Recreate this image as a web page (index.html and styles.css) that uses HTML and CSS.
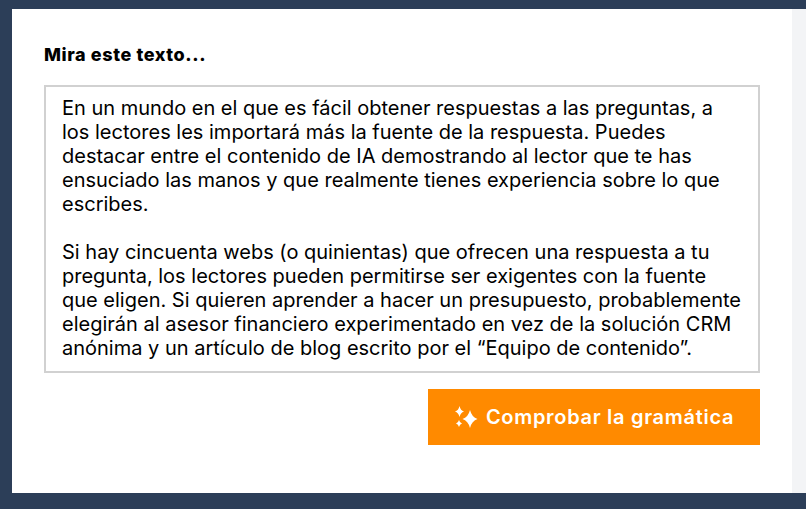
FILE: index.html
```html
<!DOCTYPE html>
<html lang="es">
<head>
    <meta charset="UTF-8">
    <meta name="viewport" content="width=device-width, initial-scale=1.0">
    <title>Comprobar la gramática</title>
    <link rel="stylesheet" href="styles.css">
</head>
<body>
    <main class="panel">
        <div class="panel-inner">
            <label class="field-label">Mira este texto...</label>
            <div class="text-box">
                <p>En un mundo en el que es fácil obtener respuestas a las preguntas, a los lectores les importará más la fuente de la respuesta. Puedes destacar entre el contenido de IA demostrando al lector que te has ensuciado las manos y que realmente tienes experiencia sobre lo que escribes.</p>
                <p>Si hay cincuenta webs (o quinientas) que ofrecen una respuesta a tu pregunta, los lectores pueden permitirse ser exigentes con la fuente que eligen. Si quieren aprender a hacer un presupuesto, probablemente elegirán al asesor financiero experimentado en vez de la solución CRM anónima y un artículo de blog escrito por el “Equipo de contenido”.</p>
            </div>
            <div class="actions">
                <button class="check-btn">
                    <svg class="sparkle" viewBox="0 0 24 24" width="24" height="24" fill="#fff">
                        <path d="M16 5Q17.800 12.200 23.500 14 17.800 15.800 16 23 14.200 15.800 8.500 14 14.200 12.200 16 5z"/>
                        <path d="M5.500 1Q6.500 5.500 10 6.500 6.500 7.500 5.500 12 4.500 7.500 1 6.500 4.500 5.500 5.500 1z"/>
                        <path d="M5 15Q5.700 17.800 8 18.500 5.700 19.200 5 22 4.300 19.200 2 18.500 4.300 17.800 5 15z"/>
                    </svg>
                    <span>Comprobar la gramática</span>
                </button>
            </div>
        </div>
    </main>
</body>
</html>
```

FILE: styles.css
```css
html, body {
    margin: 0;
    height: 100%;
}
body {
    box-sizing: border-box;
    background: #2c3e58;
    padding: 9px 0 16px 12px;
    font-family: Inter, sans-serif;
    color: #000;
    overflow: hidden;
}
.panel {
    height: 100%;
    background: #f3f4f6;
    padding-right: 14px;
}
.panel-inner {
    box-sizing: border-box;
    height: 100%;
    background: #fff;
    padding: 35px 32px 0;
}
.field-label {
    display: block;
    font-family: Inter, sans-serif;
    font-weight: 800;
    font-size: 18px;
    letter-spacing: 0.6px;
    line-height: 22px;
    margin-bottom: 19px;
}
.text-box {
    box-sizing: border-box;
    height: 288px;
    border: 2px solid #d1d1d1;
    padding: 9px 16px;
    font-size: 20px;
    line-height: 24px;
}
.text-box p {
    margin: 0 0 24px;
}
.actions {
    display: flex;
    justify-content: flex-end;
    margin-top: 16px;
}
.check-btn {
    display: flex;
    align-items: center;
    justify-content: center;
    gap: 8px;
    width: 332px;
    height: 56px;
    border: none;
    background: #ff8a00;
    color: #fff;
    font-family: Inter, sans-serif;
    font-weight: 600;
    font-size: 20px;
    letter-spacing: 0.7px;
    cursor: pointer;
}
```
